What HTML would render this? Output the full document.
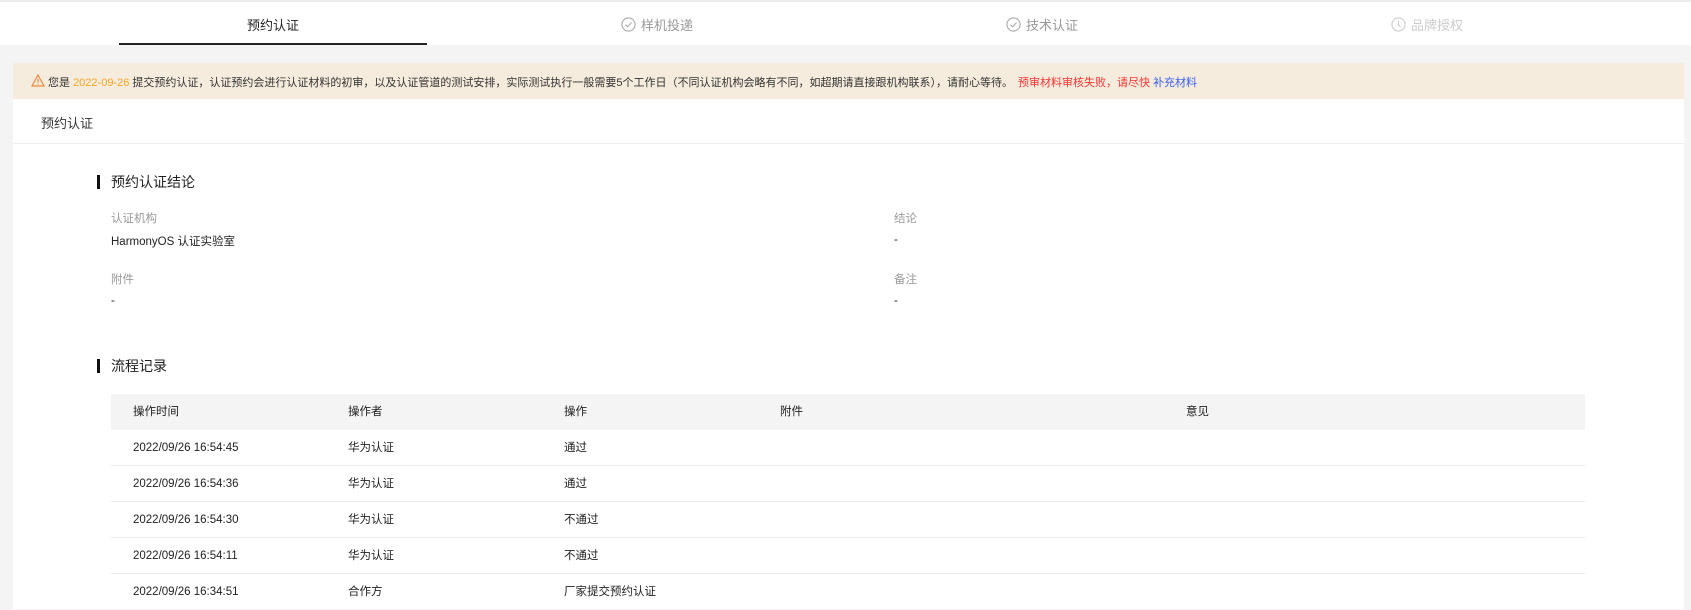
<!DOCTYPE html>
<html><head><meta charset="utf-8"><style>
*{margin:0;padding:0;box-sizing:border-box}
body{width:1691px;height:609px;overflow:hidden;background:#f4f4f4;font-family:"Liberation Sans","Noto Sans CJK SC",sans-serif;color:#222;position:relative}
.abs{position:absolute;white-space:nowrap}
.tabs{position:absolute;left:0;top:0;width:1691px;height:45px;background:#fff;border-top:2px solid #ececec}
.tab{position:absolute;top:13px;font-size:13px;color:#999;display:flex;align-items:center;gap:5px}
.panel{position:absolute;left:13px;top:99px;width:1671px;height:510px;background:#fff}
.banner{position:absolute;left:13px;top:63px;width:1671px;height:36px;background:#f5ecdd;font-size:11px;color:#333}
.lbl{font-size:11.5px;color:#999}
.val{font-size:11.5px;color:#222}
.th{position:absolute;left:111px;top:394px;width:1474px;height:36px;background:#f4f4f4}
.row{position:absolute;left:111px;width:1474px;height:36px;border-bottom:1px solid #ebebeb}
.c{position:absolute;top:0;height:36px;line-height:36px;font-size:11.5px;color:#222;white-space:nowrap}
</style></head><body>
<div class="tabs">
 <div class="tab" style="left:247px;color:#222">预约认证</div>
 <div style="position:absolute;left:119px;top:41px;width:308px;height:2px;background:#222"></div>
 <div class="tab" style="left:621px"><svg width="15" height="15" viewBox="0 0 16 16"><circle cx="8" cy="8" r="7" fill="none" stroke="#aaa" stroke-width="1.2"/><path d="M4.8 8.2l2.2 2.2 4.2-4.4" fill="none" stroke="#aaa" stroke-width="1.2"/></svg>样机投递</div>
 <div class="tab" style="left:1006px"><svg width="15" height="15" viewBox="0 0 16 16"><circle cx="8" cy="8" r="7" fill="none" stroke="#aaa" stroke-width="1.2"/><path d="M4.8 8.2l2.2 2.2 4.2-4.4" fill="none" stroke="#aaa" stroke-width="1.2"/></svg>技术认证</div>
 <div class="tab" style="left:1391px;color:#ccc"><svg width="15" height="15" viewBox="0 0 16 16"><circle cx="8" cy="8" r="7" fill="none" stroke="#ccc" stroke-width="1.2"/><path d="M8 4v4.5l2 2" fill="none" stroke="#ccc" stroke-width="1.2"/></svg>品牌授权</div>
</div>
<div class="panel"></div>
<div class="banner">
 <svg class="abs" style="left:18px;top:11px" width="14" height="13" viewBox="0 0 14 13"><path d="M7 1L13 12H1Z" fill="none" stroke="#f08a3c" stroke-width="1.2"/><path d="M7 5v3.5M7 9.8v1" stroke="#f08a3c" stroke-width="1.2"/></svg>
 <div class="abs" style="left:35px;top:11px">您是 <span style="color:#f5a623">2022-09-26</span> 提交预约认证，认证预约会进行认证材料的初审，以及认证管道的测试安排，实际测试执行一般需要5个工作日（不同认证机构会略有不同，如超期请直接跟机构联系），请耐心等待。</div>
 <div class="abs" style="left:1005px;top:11px;color:#f33">预审材料审核失败，请尽快 <span style="color:#3a5ef0">补充材料</span></div>
</div>
<div class="abs" style="left:41px;top:113px;font-size:13px;color:#333">预约认证</div>
<div style="position:absolute;left:13px;top:143px;width:1671px;height:1px;background:#efefef"></div>

<div style="position:absolute;left:97px;top:175px;width:3px;height:14px;background:#111"></div>
<div class="abs" style="left:111px;top:172px;font-size:14px">预约认证结论</div>
<div class="abs lbl" style="left:111px;top:210px">认证机构</div>
<div class="abs val" style="left:111px;top:233px">HarmonyOS 认证实验室</div>
<div class="abs lbl" style="left:894px;top:210px">结论</div>
<div class="abs val" style="left:894px;top:234px">-</div>
<div class="abs lbl" style="left:111px;top:271px">附件</div>
<div class="abs val" style="left:111px;top:295px">-</div>
<div class="abs lbl" style="left:894px;top:271px">备注</div>
<div class="abs val" style="left:894px;top:295px">-</div>

<div style="position:absolute;left:97px;top:359px;width:3px;height:14px;background:#111"></div>
<div class="abs" style="left:111px;top:356px;font-size:14px">流程记录</div>

<div class="th"><span class="c" style="left:22px">操作时间</span><span class="c" style="left:237px">操作者</span><span class="c" style="left:453px">操作</span><span class="c" style="left:669px">附件</span><span class="c" style="left:1075px">意见</span></div>
<div class="row" style="top:430px"><span class="c" style="left:22px">2022/09/26 16:54:45</span><span class="c" style="left:237px">华为认证</span><span class="c" style="left:453px">通过</span></div>
<div class="row" style="top:466px"><span class="c" style="left:22px">2022/09/26 16:54:36</span><span class="c" style="left:237px">华为认证</span><span class="c" style="left:453px">通过</span></div>
<div class="row" style="top:502px"><span class="c" style="left:22px">2022/09/26 16:54:30</span><span class="c" style="left:237px">华为认证</span><span class="c" style="left:453px">不通过</span></div>
<div class="row" style="top:538px"><span class="c" style="left:22px">2022/09/26 16:54:11</span><span class="c" style="left:237px">华为认证</span><span class="c" style="left:453px">不通过</span></div>
<div class="row" style="top:574px;border:none"><span class="c" style="left:22px">2022/09/26 16:34:51</span><span class="c" style="left:237px">合作方</span><span class="c" style="left:453px">厂家提交预约认证</span></div>
</body></html>
